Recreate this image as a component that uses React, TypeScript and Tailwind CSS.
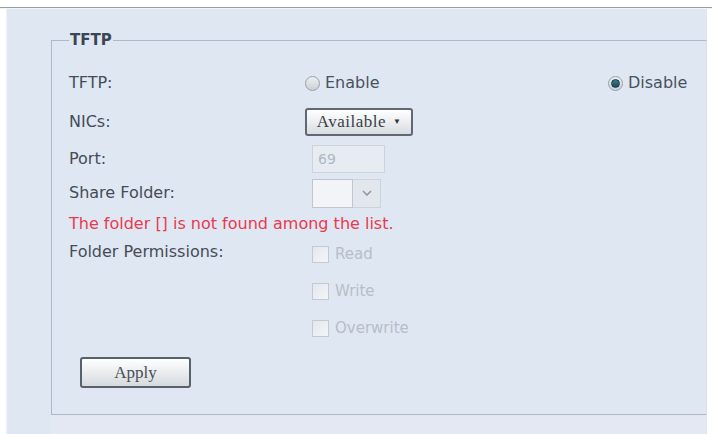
import React from 'react';

function Radio({ checked, label }: { checked?: boolean; label: string }) {
  return (
    <label className="flex items-center gap-[5px]">
      <span className="w-[15px] h-[15px] rounded-full border border-[#97a0aa] bg-gradient-to-b from-[#eef0f2] to-[#c9d0d7] flex items-center justify-center">
        {checked && <span className="w-[9px] h-[9px] rounded-full bg-gradient-to-b from-[#3d7c8c] to-[#1d4a56] border border-[#183c46]" />}
      </span>
      <span className="text-[#4a525e]">{label}</span>
    </label>
  );
}

function Check({ label }: { label: string }) {
  return (
    <div className="h-[37px] flex items-center gap-[6px]">
      <span className="w-[17px] h-[17px] border border-[#c3cad2] bg-gradient-to-br from-[#e3e8ee] to-[#f3f5f8]" />
      <span className="text-[#b7bec8] text-[15px]">{label}</span>
    </div>
  );
}

export default function App() {
  const font = { fontFamily: '"DejaVu Sans", Verdana, sans-serif' };
  return (
    <div className="w-[712px] h-[434px] bg-white overflow-hidden" style={font}>
      <div className="h-[7px]" />
      <div className="border-t border-[#9c9c9c] h-[2px] bg-[#f4f5f7]" />
      <div className="ml-[6px] mr-[5px] h-[425px] border-l border-[#f0f3f8] bg-[#dfe7f2] pl-[44px] pt-[23px] flex flex-col">
        <fieldset className="border border-[#aeb9c7] border-r-[#d7dfea] h-[383px] pl-[17px] pr-0">
          <legend className="px-[1px] text-[15px] font-bold text-[#3b4554] leading-[17px]">TFTP</legend>

          <div className="text-[16px] text-[#454c57] mt-[17px]">
            <div className="h-[34px] flex items-center">
              <div className="w-[236px]">TFTP:</div>
              <div className="w-[303px]"><Radio label="Enable" /></div>
              <Radio checked label="Disable" />
            </div>

            <div className="h-[44px] flex items-center">
              <div className="w-[236px]">NICs:</div>
              <button className="w-[108px] h-[28px] rounded-[3px] border-2 border-[#5f6873] bg-gradient-to-b from-white to-[#d9dde1] flex items-center justify-center gap-[7px] text-[17px] tracking-[0.5px] text-[#3a3f46]" style={{ fontFamily: '"Liberation Serif", serif' }}>
                Available
                <span className="text-[8px] text-[#333]">▼</span>
              </button>
            </div>

            <div className="h-[30px] flex items-center">
              <div className="w-[243px]">Port:</div>
              <div className="w-[73px] h-[28px] border border-[#cdd3da] bg-[#e7ecf3] px-[5px] flex items-center text-[#b0b7c1] text-[14px]">69</div>
            </div>

            <div className="h-[38px] flex items-center">
              <div className="w-[243px]">Share Folder:</div>
              <div className="w-[41px] h-[29px] border border-[#bfc6ce] bg-[#f2f4f7]" />
              <div className="w-[28px] h-[29px] border border-l-0 border-[#cdd3da] bg-[#e2e7ee] flex items-center justify-center">
                <svg width="10" height="6" viewBox="0 0 10 6"><path d="M1 1l4 4 4-4" fill="none" stroke="#8f98a3" strokeWidth="1.6" /></svg>
              </div>
            </div>

            <div className="h-[24px] flex items-center text-[#e83a4e]">The folder [] is not found among the list.</div>

            <div className="flex">
              <div className="w-[243px] h-[32px] flex items-center">Folder Permissions:</div>
              <div>
                <Check label="Read" />
                <Check label="Write" />
                <Check label="Overwrite" />
              </div>
            </div>

            <button className="mt-[10px] ml-[11px] w-[111px] h-[31px] rounded-[3px] border-2 border-[#56616c] bg-gradient-to-b from-white to-[#d6dade] text-[17px] text-[#4a4f56]" style={{ fontFamily: '"Liberation Serif", serif' }}>
              Apply
            </button>
          </div>
        </fieldset>
        <div className="flex-1 bg-[#e4e8f3]" />
      </div>
    </div>
  );
}
